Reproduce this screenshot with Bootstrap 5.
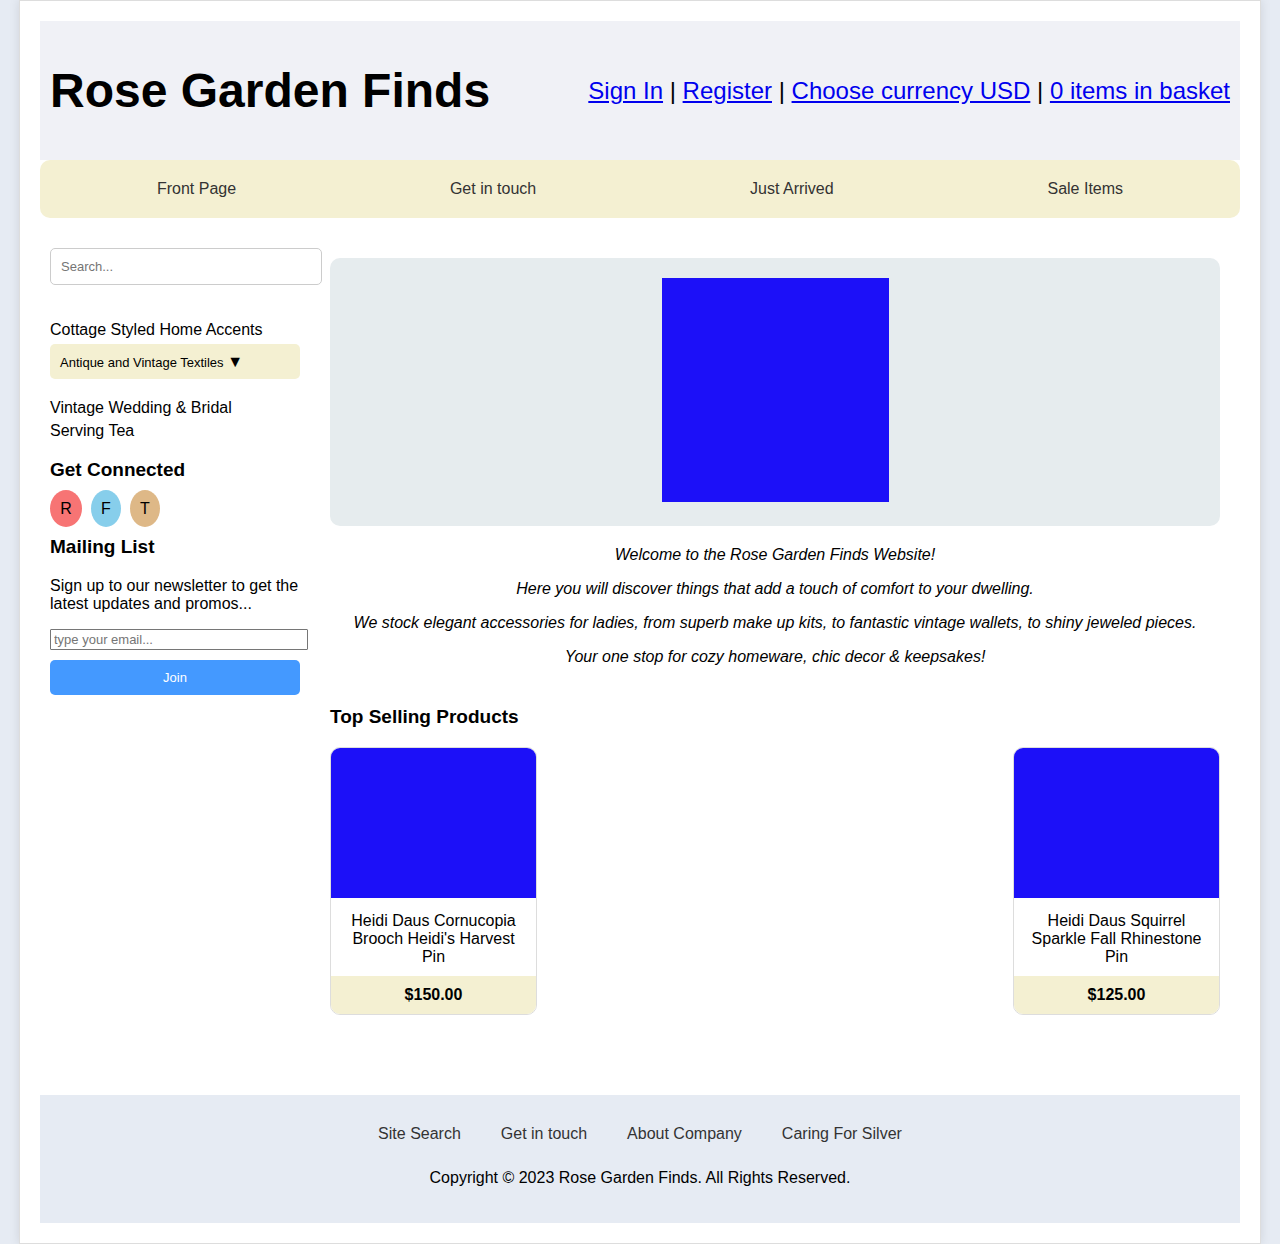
<!DOCTYPE html>
<html lang="en">
<head>
<meta charset="utf-8">
<meta name="viewport" content="width=device-width, initial-scale=1">
<title>Rose Garden Finds</title>
<link href="https://cdn.jsdelivr.net/npm/bootstrap@5.3.0/dist/css/bootstrap.min.css" rel="stylesheet">
<style>
  body { background: #e6ebf3; color: #000; font-family: "Liberation Sans", Arial, sans-serif; font-size: 16px; line-height: 18px; }
  .shop { max-width: 1242px; padding: 20px; border: 1px solid #ddd; box-shadow: 0 0 10px rgba(0, 0, 0, .1); }
  .masthead { background: #f0f1f6; padding: 42px 10px; }
  .masthead h1 { font-size: 48px; line-height: 55px; font-weight: 700; }
  .account { font-size: 24px; line-height: 28px; }
  .account a { color: #00e; }
  .cream { background: #f4f0d2; }
  .mainnav { padding: 20px 10px; border-radius: 10px; }
  .plain { color: #333; text-decoration: none; }
  .plain:hover { text-decoration: underline; }
  .shop h2 { font-size: 19px; line-height: 21px; font-weight: 700; }
  .content-area { margin: 20px 0; }
  .side { width: 270px; padding: 10px; }
  .side input, .side button { font-size: 13px; line-height: 15px; }
  .side input::placeholder { color: #757575; opacity: 1; }
  .search { width: 272px; height: 37px; padding: 10px; border: 1px solid #ccc; border-radius: 5px; }
  .cats { margin-top: 36px; gap: 5px; }
  .cats a { color: #000; text-decoration: none; }
  .cats button { height: 35px; padding: 0 10px; border: 0; border-radius: 5px; margin-bottom: 15px; color: #000; }
  .arrow { font-size: 16px; }
  .connect { margin: 19px 0 10px; }
  .social { gap: 9px; }
  .social a { min-width: 30px; padding: 10px 0; line-height: 17px; border-radius: 50%; color: #000; text-align: center; text-decoration: none; }
  .social .red { min-width: 32px; background: #f77474; }
  .sky { background: skyblue; }
  .tan { background: burlywood; }
  .mailing { margin: 9px 0 20px; }
  .email { width: 258px; height: 21px; padding: 1px 3px; border: 1px solid #767676; border-radius: 1px; }
  .join { height: 35px; margin-top: 10px; border: 0; border-radius: 5px; background: #4499ff; color: #fff; }
  .goods { padding: 20px; min-width: 0; }
  .hero { background: #e6ecee; padding: 20px 20px 24px; border-radius: 10px; }
  .blue { background: #1c10f8; }
  .hero .blue { width: 227px; height: 224px; }
  .intro { margin: 20px 0 40px; gap: 16px; }
  .product { width: 207px; border: 1px solid #ddd; border-radius: 10px; }
  .product .blue { height: 150px; }
  .product h3 { font-size: 16px; line-height: 18px; font-weight: 400; padding: 14px 15px 10px; }
  .price { padding: 10px; font-weight: 700; }
  .foot { background: #e6ebf3; margin-top: 60px; padding: 30px 20px 36px; }
  .footnav { gap: 10px 40px; margin-bottom: 26px; }
</style>
</head>
<body>
<div class="shop bg-white mx-auto">
  <header class="masthead d-flex flex-wrap justify-content-between align-items-center">
    <h1 class="m-0">Rose Garden Finds</h1>
    <div class="account"><a href="#">Sign In</a> | <a href="#">Register</a> | <a href="#">Choose currency USD</a> | <a href="#">0 items in basket</a></div>
  </header>
  <nav class="mainnav cream d-flex flex-wrap justify-content-around" aria-label="Main">
    <a class="plain" href="#">Front Page</a>
    <a class="plain" href="#">Get in touch</a>
    <a class="plain" href="#">Just Arrived</a>
    <a class="plain" href="#">Sale Items</a>
  </nav>

  <div class="content-area d-flex flex-column flex-md-row">
    <aside class="side flex-shrink-0">
      <input class="search d-block" type="search" placeholder="Search..." aria-label="Search">
      <div class="cats d-flex flex-column">
        <a href="#">Cottage Styled Home Accents</a>
        <button class="cream text-start" type="button">Antique and Vintage Textiles <span class="arrow">▼</span></button>
        <a href="#">Vintage Wedding &amp; Bridal</a>
        <a href="#">Serving Tea</a>
      </div>
      <h2 class="connect">Get Connected</h2>
      <div class="social d-flex">
        <a class="red" href="#">R</a>
        <a class="sky" href="#">F</a>
        <a class="tan" href="#">T</a>
      </div>
      <h2 class="mailing">Mailing List</h2>
      <form>
        <label class="mb-3 d-block" for="email">Sign up to our newsletter to get the latest updates and promos...</label>
        <input class="email d-block" id="email" type="email" placeholder="type your email...">
        <button class="join w-100" type="button">Join</button>
      </form>
    </aside>

    <main class="goods flex-grow-1">
      <div class="hero d-flex justify-content-center"><div class="blue"></div></div>
      <div class="intro d-flex flex-column text-center fst-italic">
        <p class="m-0">Welcome to the Rose Garden Finds Website!</p>
        <p class="m-0">Here you will discover things that add a touch of comfort to your dwelling.</p>
        <p class="m-0">We stock elegant accessories for ladies, from superb make up kits, to fantastic vintage wallets, to shiny jeweled pieces.</p>
        <p class="m-0">Your one stop for cozy homeware, chic decor &amp; keepsakes!</p>
      </div>
      <h2 class="mb-0">Top Selling Products</h2>
      <div class="d-flex flex-wrap justify-content-between gap-3 mt-3 pt-1">
        <article class="product overflow-hidden text-center">
          <div class="blue"></div>
          <h3 class="m-0">Heidi Daus Cornucopia Brooch Heidi's Harvest Pin</h3>
          <div class="price cream">$150.00</div>
        </article>
        <article class="product overflow-hidden text-center">
          <div class="blue"></div>
          <h3 class="m-0">Heidi Daus Squirrel Sparkle Fall Rhinestone Pin</h3>
          <div class="price cream">$125.00</div>
        </article>
      </div>
    </main>
  </div>

  <footer class="foot text-center">
    <div class="footnav d-flex flex-wrap justify-content-center">
      <a class="plain" href="#">Site Search</a>
      <a class="plain" href="#">Get in touch</a>
      <a class="plain" href="#">About Company</a>
      <a class="plain" href="#">Caring For Silver</a>
    </div>
    <p class="m-0">Copyright © 2023 Rose Garden Finds. All Rights Reserved.</p>
  </footer>
</div>
<script src="https://cdn.jsdelivr.net/npm/bootstrap@5.3.0/dist/js/bootstrap.bundle.min.js"></script>
</body>
</html>
